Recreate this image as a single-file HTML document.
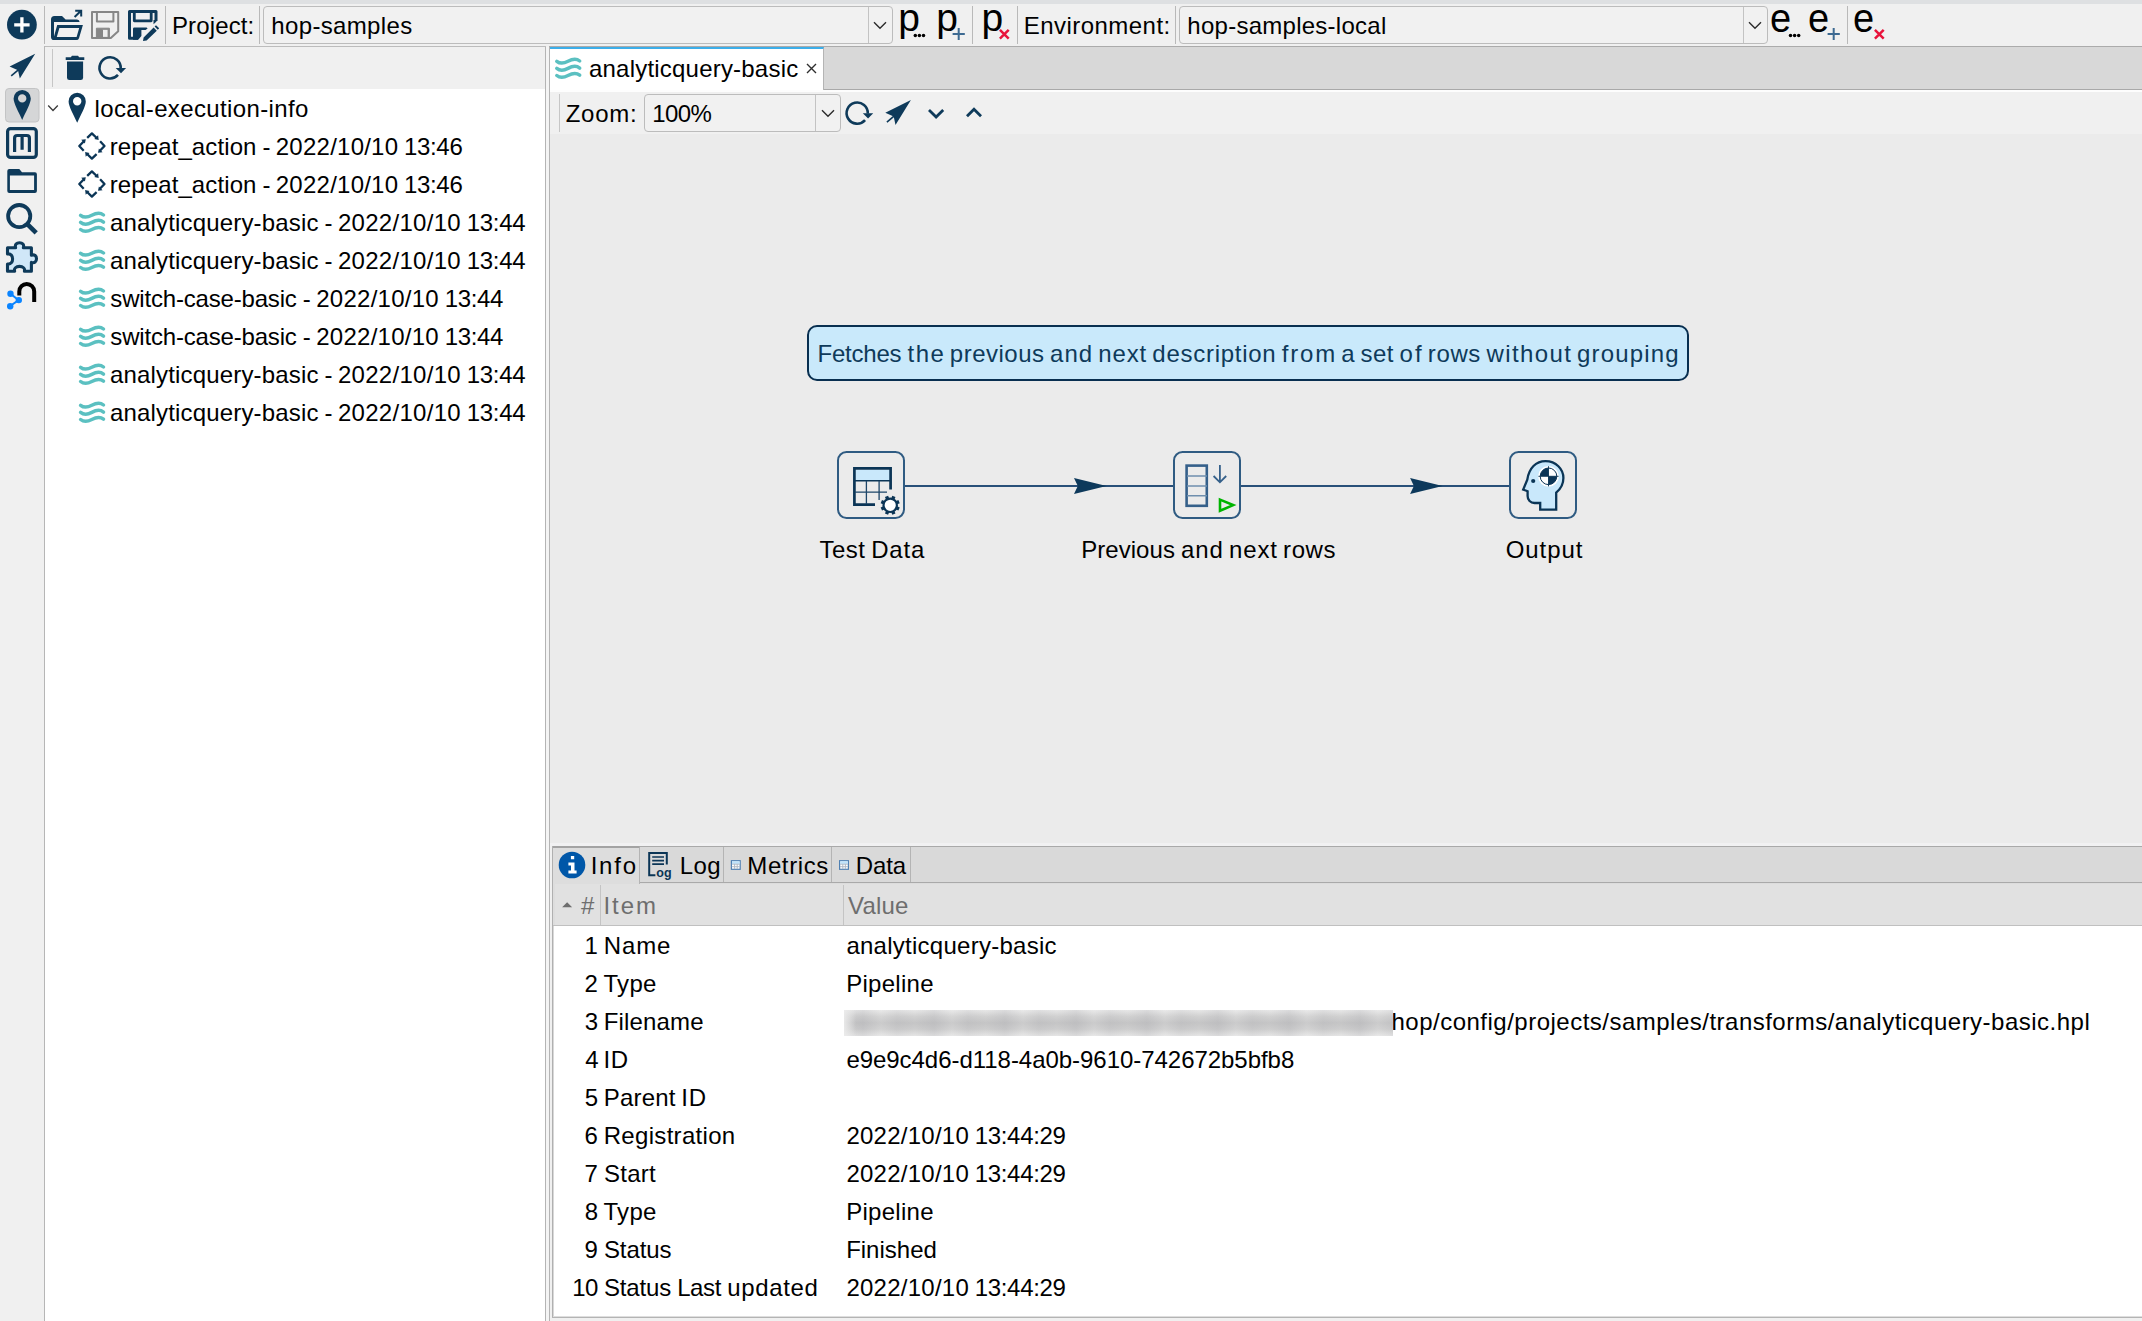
<!DOCTYPE html><html><head><meta charset='utf-8'><title>Hop</title><style>
*{box-sizing:border-box;margin:0;padding:0}
html,body{width:2142px;height:1321px;overflow:hidden;background:#f0f0f0}
body{position:relative;font-family:"Liberation Sans",sans-serif;font-size:24px;color:#000;line-height:28px}
.a{position:absolute}
.t{position:absolute;white-space:pre;height:28px;line-height:28px}
.vs{position:absolute;width:1px;background:#c6c6c6}
.combo{position:absolute;border:1px solid #bcbcbc;border-radius:4px;background:#f1f1f1}
.combo i{position:absolute;top:0;bottom:0;width:1px;background:#c3c3c3}
svg{position:absolute;overflow:visible}
</style></head><body>
<div class="a" style="left:0px;top:0px;width:2142px;height:4px;background:#dee0e2"></div>
<div class="a" style="left:44px;top:46px;width:502px;height:1px;background:#bcbcbc"></div>
<div class="a" style="left:549px;top:46px;width:1593px;height:1px;background:#ababab"></div>
<div class="a" style="left:44px;top:46px;width:1px;height:1275px;background:#b6b6b6"></div>
<div class="a" style="left:45px;top:89px;width:500px;height:1232px;background:#fff"></div>
<div class="a" style="left:545px;top:47px;width:1px;height:1274px;background:#b4b4b4"></div>
<div class="a" style="left:546px;top:47px;width:3px;height:1274px;background:#f4f4f4"></div>
<div class="a" style="left:549px;top:47px;width:1px;height:1274px;background:#b4b4b4"></div>
<div class="a" style="left:550px;top:47px;width:1592px;height:42px;background:#d8d8d8"></div>
<div class="a" style="left:550px;top:89px;width:1592px;height:1px;background:#a9a9a9"></div>
<div class="a" style="left:550px;top:90px;width:1592px;height:2px;background:#fdfdfd"></div>
<div class="a" style="left:550px;top:47px;width:274px;height:43px;background:#fff;border-top:2px solid #3daee9;border-right:1px solid #b4b4b4"></div>
<div class="a" style="left:550px;top:134px;width:1592px;height:709px;background:#ebebeb"></div>
<div class="a" style="left:550px;top:843px;width:1592px;height:3px;background:#f1f1f2"></div>
<div class="a" style="left:552px;top:846px;width:1590px;height:1px;background:#a9a9a9"></div>
<div class="a" style="left:552px;top:847px;width:1590px;height:35px;background:#d9d9d9"></div>
<div class="a" style="left:552px;top:882px;width:1590px;height:1px;background:#a9a9a9"></div>
<div class="a" style="left:552px;top:883px;width:1590px;height:1px;background:#dcdcdc"></div>
<div class="a" style="left:552px;top:846px;width:1px;height:472px;background:#b0b0b0"></div>
<div class="a" style="left:553px;top:846px;width:87px;height:38px;background:#dddddd;border-top:2px solid #a3a3a3;border-right:1px solid #b4b4b4"></div>
<div class="a" style="left:723px;top:847px;width:1px;height:35px;background:#b4b4b4"></div>
<div class="a" style="left:831px;top:847px;width:1px;height:35px;background:#b4b4b4"></div>
<div class="a" style="left:910px;top:847px;width:1px;height:35px;background:#b4b4b4"></div>
<div class="a" style="left:553px;top:884px;width:1589px;height:433px;background:#fff"></div>
<div class="a" style="left:553px;top:884px;width:1589px;height:41px;background:#e1e1e1"></div>
<div class="a" style="left:553px;top:884px;width:2px;height:41px;background:#dddddd"></div>
<div class="a" style="left:553px;top:925px;width:1589px;height:1px;background:#c0c0c0"></div>
<div class="a" style="left:553px;top:926px;width:1px;height:391px;background:#d8d8d8"></div>
<div class="a" style="left:600px;top:885px;width:1px;height:40px;background:#c4c4c4"></div>
<div class="a" style="left:843px;top:885px;width:1px;height:40px;background:#c4c4c4"></div>
<div class="a" style="left:552px;top:1317px;width:1590px;height:1px;background:#b4b4b4"></div>
<div class="a" style="left:553px;top:1316px;width:1589px;height:1px;background:#dedede"></div>
<div class="a" style="left:552px;top:1318px;width:1590px;height:3px;background:#f0f0f0"></div>
<div class="vs" style="left:44px;top:6px;height:38px;background:#b9b9b9"></div>
<div class="vs" style="left:165px;top:6px;height:38px;background:#b9b9b9"></div>
<div class="vs" style="left:259px;top:6px;height:38px;background:#b9b9b9"></div>
<div class="vs" style="left:972px;top:6px;height:38px;background:#b9b9b9"></div>
<div class="vs" style="left:1017px;top:6px;height:38px;background:#b9b9b9"></div>
<div class="vs" style="left:1175px;top:6px;height:38px;background:#b9b9b9"></div>
<div class="vs" style="left:1847px;top:6px;height:38px;background:#b9b9b9"></div>
<div class="a" style="left:898.3px;top:-4px;font-size:39px;line-height:44px;height:44px;white-space:pre">p</div>
<div class="a" style="left:936.2px;top:-4px;font-size:39px;line-height:44px;height:44px;white-space:pre">p</div>
<div class="a" style="left:981.4px;top:-4px;font-size:39px;line-height:44px;height:44px;white-space:pre">p</div>
<div class="a" style="left:1769.8px;top:-4px;font-size:40px;line-height:44px;height:44px;white-space:pre;transform:scaleX(.95);transform-origin:0 0">e</div>
<div class="a" style="left:1808.2px;top:-4px;font-size:40px;line-height:44px;height:44px;white-space:pre;transform:scaleX(.95);transform-origin:0 0">e</div>
<div class="a" style="left:1852.6px;top:-4px;font-size:40px;line-height:44px;height:44px;white-space:pre;transform:scaleX(.95);transform-origin:0 0">e</div>
<div class="t" style="left:171.93px;top:12px;letter-spacing:0.14px">Project:</div>
<div class="combo" style="left:263px;top:6px;width:630px;height:38px"><i style="left:604px"></i></div>
<div class="t" style="left:271.34px;top:12px;letter-spacing:0.34px">hop-samples</div>
<div class="t" style="left:1023.73px;top:12px;letter-spacing:0.46px">Environment:</div>
<div class="combo" style="left:1179px;top:6px;width:589px;height:38px"><i style="left:563px"></i></div>
<div class="t" style="left:1187.34px;top:12px;letter-spacing:0.26px">hop-samples-local</div>
<div class="vs" style="left:52px;top:49px;height:38px"></div>
<div class="t" style="left:94.58px;top:95px;letter-spacing:0.37px">local-execution-info</div>
<div class="t" style="left:109.71px;top:133px"><span style="display:inline-block;width:152.71px;letter-spacing:0.11px">repeat_action </span><span style="display:inline-block;width:13.38px;letter-spacing:-0.60px">- </span><span style="display:inline-block;width:128.22px;letter-spacing:0.24px">2022/10/10 </span><span style="letter-spacing:-0.33px">13:46</span></div>
<div class="t" style="left:109.71px;top:171px"><span style="display:inline-block;width:152.71px;letter-spacing:0.11px">repeat_action </span><span style="display:inline-block;width:13.38px;letter-spacing:-0.60px">- </span><span style="display:inline-block;width:128.22px;letter-spacing:0.24px">2022/10/10 </span><span style="letter-spacing:-0.33px">13:46</span></div>
<div class="t" style="left:109.98px;top:209px"><span style="display:inline-block;width:214.55px;letter-spacing:0.17px">analyticquery-basic </span><span style="display:inline-block;width:13.43px;letter-spacing:-0.57px">- </span><span style="display:inline-block;width:128.70px;letter-spacing:0.29px">2022/10/10 </span><span style="letter-spacing:-0.28px">13:44</span></div>
<div class="t" style="left:109.98px;top:247px"><span style="display:inline-block;width:214.55px;letter-spacing:0.17px">analyticquery-basic </span><span style="display:inline-block;width:13.43px;letter-spacing:-0.57px">- </span><span style="display:inline-block;width:128.70px;letter-spacing:0.29px">2022/10/10 </span><span style="letter-spacing:-0.28px">13:44</span></div>
<div class="t" style="left:110.33px;top:285px"><span style="display:inline-block;width:192.50px;letter-spacing:-0.18px">switch-case-basic </span><span style="display:inline-block;width:13.40px;letter-spacing:-0.59px">- </span><span style="display:inline-block;width:128.42px;letter-spacing:0.26px">2022/10/10 </span><span style="letter-spacing:-0.31px">13:44</span></div>
<div class="t" style="left:110.33px;top:323px"><span style="display:inline-block;width:192.50px;letter-spacing:-0.18px">switch-case-basic </span><span style="display:inline-block;width:13.40px;letter-spacing:-0.59px">- </span><span style="display:inline-block;width:128.42px;letter-spacing:0.26px">2022/10/10 </span><span style="letter-spacing:-0.31px">13:44</span></div>
<div class="t" style="left:109.98px;top:361px"><span style="display:inline-block;width:214.55px;letter-spacing:0.17px">analyticquery-basic </span><span style="display:inline-block;width:13.43px;letter-spacing:-0.57px">- </span><span style="display:inline-block;width:128.70px;letter-spacing:0.29px">2022/10/10 </span><span style="letter-spacing:-0.28px">13:44</span></div>
<div class="t" style="left:109.98px;top:399px"><span style="display:inline-block;width:214.55px;letter-spacing:0.17px">analyticquery-basic </span><span style="display:inline-block;width:13.43px;letter-spacing:-0.57px">- </span><span style="display:inline-block;width:128.70px;letter-spacing:0.29px">2022/10/10 </span><span style="letter-spacing:-0.28px">13:44</span></div>
<div class="t" style="left:588.98px;top:55px;letter-spacing:0.21px">analyticquery-basic</div>
<div class="vs" style="left:559px;top:94px;height:38px"></div>
<div class="t" style="left:565.64px;top:100px;letter-spacing:0.76px">Zoom:</div>
<div class="combo" style="left:644px;top:94px;width:197px;height:38px"><i style="left:170px"></i></div>
<div class="t" style="left:652.17px;top:100px;letter-spacing:-0.57px">100%</div>
<div class="a" style="left:807px;top:325px;width:882px;height:56px;background:#c9e9fb;border:2px solid #082f50;border-radius:10px"></div>
<div class="t" style="left:817.53px;top:340px;color:#0e3a5a"><span style="display:inline-block;width:90.08px;letter-spacing:-0.23px">Fetches </span><span style="display:inline-block;width:42.24px;letter-spacing:1.39px">the </span><span style="display:inline-block;width:100.28px;letter-spacing:0.49px">previous </span><span style="display:inline-block;width:48.11px;letter-spacing:0.99px">and </span><span style="display:inline-block;width:54.16px;letter-spacing:0.90px">next </span><span style="display:inline-block;width:129.47px;letter-spacing:0.73px">description </span><span style="display:inline-block;width:59.43px;letter-spacing:1.78px">from </span><span style="display:inline-block;width:19.24px;letter-spacing:-0.21px">a </span><span style="display:inline-block;width:38.98px;letter-spacing:0.44px">set </span><span style="display:inline-block;width:28.33px;letter-spacing:2.22px">of </span><span style="display:inline-block;width:58.63px;letter-spacing:0.63px">rows </span><span style="display:inline-block;width:90.59px;letter-spacing:1.41px">without </span><span style="letter-spacing:1.17px">grouping</span></div>
<div class="t" style="left:819.56px;top:536px"><span style="display:inline-block;width:51.61px;letter-spacing:0.46px">Test </span><span style="letter-spacing:0.81px">Data</span></div>
<div class="t" style="left:1081.13px;top:536px"><span style="display:inline-block;width:99.87px;letter-spacing:0.06px">Previous </span><span style="display:inline-block;width:48.03px;letter-spacing:0.96px">and </span><span style="display:inline-block;width:54.08px;letter-spacing:0.87px">next </span><span style="letter-spacing:0.60px">rows</span></div>
<div class="t" style="left:1505.76px;top:536px;letter-spacing:0.91px">Output</div>
<div class="a" style="left:656.2px;top:866px;font-size:12.5px;font-weight:bold;line-height:14px;height:14px;color:#0b3556;letter-spacing:.3px;white-space:pre">og</div>
<div class="t" style="left:590.69px;top:852px;letter-spacing:1.76px">Info</div>
<div class="t" style="left:679.73px;top:852px;letter-spacing:0.48px">Log</div>
<div class="t" style="left:747.33px;top:852px;letter-spacing:0.60px">Metrics</div>
<div class="t" style="left:855.63px;top:852px;letter-spacing:-0.04px">Data</div>
<div class="t" style="left:580.99px;top:892px;color:#6e6e6e;letter-spacing:1.76px">#</div>
<div class="t" style="left:603.49px;top:892px;color:#6e6e6e;letter-spacing:1.97px">Item</div>
<div class="t" style="left:847.99px;top:892px;color:#6e6e6e;letter-spacing:0.19px">Value</div>
<div class="t" style="left:584.57px;top:932px;letter-spacing:-2.56px">1</div>
<div class="t" style="left:603.73px;top:932px;letter-spacing:0.90px">Name</div>
<div class="t" style="left:846.38px;top:932px;letter-spacing:0.26px">analyticquery-basic</div>
<div class="t" style="left:584.49px;top:970px;letter-spacing:0.85px">2</div>
<div class="t" style="left:603.46px;top:970px;letter-spacing:0.32px">Type</div>
<div class="t" style="left:846.13px;top:970px;letter-spacing:0.28px">Pipeline</div>
<div class="t" style="left:584.79px;top:1008px;letter-spacing:0.41px">3</div>
<div class="t" style="left:603.73px;top:1008px;letter-spacing:0.16px">Filename</div>
<div class="t" style="left:585.15px;top:1046px;letter-spacing:-0.31px">4</div>
<div class="t" style="left:603.49px;top:1046px;letter-spacing:0.69px">ID</div>
<div class="t" style="left:846.38px;top:1046px;letter-spacing:-0.04px">e9e9c4d6-d118-4a0b-9610-742672b5bfb8</div>
<div class="t" style="left:584.74px;top:1084px;letter-spacing:0.41px">5</div>
<div class="t" style="left:603.73px;top:1084px"><span style="display:inline-block;width:77.64px;letter-spacing:0.19px">Parent </span><span style="letter-spacing:0.69px">ID</span></div>
<div class="t" style="left:584.48px;top:1122px;letter-spacing:0.71px">6</div>
<div class="t" style="left:603.73px;top:1122px;letter-spacing:0.31px">Registration</div>
<div class="t" style="left:846.39px;top:1122px"><span style="display:inline-block;width:128.31px;letter-spacing:0.25px">2022/10/10 </span><span style="letter-spacing:-0.31px">13:44:29</span></div>
<div class="t" style="left:584.47px;top:1160px;letter-spacing:0.88px">7</div>
<div class="t" style="left:603.91px;top:1160px;letter-spacing:0.29px">Start</div>
<div class="t" style="left:846.39px;top:1160px"><span style="display:inline-block;width:128.31px;letter-spacing:0.25px">2022/10/10 </span><span style="letter-spacing:-0.31px">13:44:29</span></div>
<div class="t" style="left:584.66px;top:1198px;letter-spacing:0.53px">8</div>
<div class="t" style="left:603.46px;top:1198px;letter-spacing:0.32px">Type</div>
<div class="t" style="left:846.13px;top:1198px;letter-spacing:0.28px">Pipeline</div>
<div class="t" style="left:584.58px;top:1236px;letter-spacing:0.70px">9</div>
<div class="t" style="left:603.91px;top:1236px;letter-spacing:-0.08px">Status</div>
<div class="t" style="left:846.13px;top:1236px;letter-spacing:0.00px">Finished</div>
<div class="t" style="left:572.37px;top:1274px;letter-spacing:-0.64px">10</div>
<div class="t" style="left:603.91px;top:1274px"><span style="display:inline-block;width:73.22px;letter-spacing:-0.16px">Status </span><span style="display:inline-block;width:50.16px;letter-spacing:-0.39px">Last </span><span style="letter-spacing:0.65px">updated</span></div>
<div class="t" style="left:846.39px;top:1274px"><span style="display:inline-block;width:128.31px;letter-spacing:0.25px">2022/10/10 </span><span style="letter-spacing:-0.31px">13:44:29</span></div>
<div class="t" style="left:1391.54px;top:1008px;letter-spacing:0.49px">hop/config/projects/samples/transforms/analyticquery-basic.hpl</div>
<div class="a" style="left:844px;top:1010px;width:549px;height:26px;background:linear-gradient(90deg,rgba(236,236,236,.9) 0,rgba(236,236,236,0) 12px),repeating-linear-gradient(90deg,rgba(140,140,150,0) 0,rgba(140,140,150,.13) 19px,rgba(255,255,255,.10) 37px,rgba(140,140,150,.08) 53px,rgba(140,140,150,0) 71px),linear-gradient(180deg,#e7e7e7 0,#d0d0d0 26%,#c5c5c6 50%,#cecece 74%,#e6e6e6 100%)"></div>
<svg width="2142" height="1321" viewBox="0 0 2142 1321" style="left:0;top:0"><circle cx="21.9" cy="24.7" r="14.9" fill="#0e3a5a"/>
<path d="M14.2 24.8h15.4M21.9 17.2v15.2" stroke="#fff" stroke-width="3.3" fill="none"/>
<path fill="#0e3a5a" fill-rule="evenodd" d="M51 19.6 Q51 16.1 54.5 16.1 L62 16.1 L65.6 19.4 L77 19.4 Q79.6 19.6 79.6 21.9 L54 21.9 L54 36.5 L57.2 24.9 L82.9 24.9 L79 38.2 Q78.4 40.1 76.3 40.1 L54 40.1 Q51 40.1 51 37 Z M59.4 27.9 L56.8 37 L76.6 37 L79.2 27.9 Z"/><path d="M74.6 17 L81 10.7 M75.2 10.7 H81.2 V16.6" stroke="#0e3a5a" stroke-width="2" fill="none"/>
<g transform="translate(91 10.9)"><path fill="none" stroke="#878787" stroke-width="2.0" stroke-linejoin="round" d="M1 1 H27.2 V20.3 L19.8 27.2 H1 Z"/><path fill="none" stroke="#878787" stroke-width="2.0" stroke-linejoin="round" d="M5.9 1 V10.6 H22.4 V1"/><path fill="#878787" stroke="#878787" stroke-width="1" stroke-linejoin="round" fill-rule="evenodd" d="M5.4 17.3 H18.4 V27.4 H5.4 Z M11.5 18.4 H17.1 V26.5 H11.5 Z"/></g>
<path fill="none" stroke="#0e3a5a" stroke-width="3" stroke-linejoin="round" d="M156 21 V11.5 H129.5 V38.2 H138"/><path fill="none" stroke="#0e3a5a" stroke-width="2.8" stroke-linejoin="round" d="M134.3 11.5 V20.8 H151.2 V11.5"/><path fill="#0e3a5a" d="M156.5 20 v1.6 l-3 2.6 v-4.2z"/><path fill="#0e3a5a" d="M133 28.8 Q133 27.6 134.4 27.6 H146.6 L147.6 28.6 L145.6 30 H141.4 V36 L138.2 39.7 H133 Z"/><path fill="#0e3a5a" d="M143 40.9 L143.6 37.4 L153.6 27.6 L156.8 30.8 L146.6 40.6 Z M154.6 26.6 L156 25.2 L159.2 28.2 L157.8 29.8 Z"/>
<path fill="#0e3a5a" d="M35.2 53.8 L9.6 66.5 L18 70.3 L19.8 78.6 Z"/><path d="M18.6 69.6 L11.2 75.8" stroke="#0e3a5a" stroke-width="1.6" fill="none"/>
<rect x="5.5" y="88.5" width="33.5" height="33.5" rx="3.5" fill="#d5d6d7" stroke="#c3c4c5" stroke-width="1"/>
<path fill="#0e3a5a" fill-rule="evenodd" d="M22.2 89.9 A8.6 8.6 0 0 1 30.8 98.6 C30.8 103.5 25.5 112.5 22.2 120 C18.9 112.5 13.6 103.5 13.6 98.6 A8.6 8.6 0 0 1 22.2 89.9 Z M22.2 94.2 A4.2 4.2 0 1 0 22.2 102.6 A4.2 4.2 0 1 0 22.2 94.2 Z"/>
<g transform="translate(55 2.8)"><path fill="#0e3a5a" fill-rule="evenodd" d="M22.2 89.9 A8.6 8.6 0 0 1 30.8 98.6 C30.8 103.5 25.5 112.5 22.2 120 C18.9 112.5 13.6 103.5 13.6 98.6 A8.6 8.6 0 0 1 22.2 89.9 Z M22.2 94.2 A4.2 4.2 0 1 0 22.2 102.6 A4.2 4.2 0 1 0 22.2 94.2 Z"/></g>
<rect x="7.6" y="128.6" width="28.7" height="28.8" rx="3" fill="none" stroke="#0e3a5a" stroke-width="3.2"/>
<path d="M14.6 151.9 V138 Q14.6 135.5 17.2 135.5 H26.8 Q29.4 135.5 29.4 138 V151.9 M22.1 136 V149.8" fill="none" stroke="#0e3a5a" stroke-width="3.2"/>
<path fill="#0e3a5a" fill-rule="evenodd" d="M7.3 171 Q7.3 169 9.3 169 H19.3 L22 172.2 H35 Q36.9 172.2 36.9 174.2 V191 Q36.9 193 34.9 193 H9.3 Q7.3 193 7.3 191 Z M9.9 175.6 V189.9 H34.1 V175.6 Z"/>
<circle cx="19.2" cy="216.1" r="11.1" fill="none" stroke="#0e3a5a" stroke-width="3.8"/>
<path d="M27.3 224.2 L36.2 232.9" stroke="#0e3a5a" stroke-width="4.6" fill="none"/>
<path fill="#d0e7f8" stroke="#0e3a5a" stroke-width="3.1" stroke-linejoin="round" d="M8.5 247.8 H15.6 C14.6 244.6 16.6 242.7 19.5 242.7 C22.4 242.7 24.4 244.6 23.4 247.8 H31.4 V255.2 C34.6 254.2 36.5 256 36.5 258.8 C36.5 261.6 34.6 263.4 31.4 262.4 V271.2 H24.4 C25.2 268.4 23 266.4 19.5 266.4 C16 266.4 13.8 268.4 14.6 271.2 H7.5 V264 C10.8 264.6 12.6 262 12.6 258.9 C12.6 255.8 10.8 253.4 7.5 254 V247.8 Z"/>
<path d="M19.3 295.5 V291.4 A7.45 7.45 0 0 1 34.2 291.4 V301.9" fill="none" stroke="#000" stroke-width="4"/>
<path d="M10.5 293.7 L18.6 300.1 L10.2 306" fill="none" stroke="#0a84ff" stroke-width="2"/>
<circle cx="10.5" cy="293.7" r="3.2" fill="#0a84ff"/>
<circle cx="18.8" cy="300.1" r="3.2" fill="#0a84ff"/>
<circle cx="10.2" cy="306.2" r="3.2" fill="#0a84ff"/>
<path fill="#0e3a5a" d="M65.7 57.2 H70.8 L72 55.7 H78 L79.2 57.2 H84.3 V60.1 H65.7 Z"/><path fill="#0e3a5a" d="M67 61.5 H83.1 V77.7 Q83.1 80.1 80.7 80.1 H69.4 Q67 80.1 67 77.7 Z"/>
<path d="M120.70 68.50 A10.6 10.6 0 1 0 117.98 74.99" fill="none" stroke="#0e3a5a" stroke-width="2.6"/><path fill="#0e3a5a" d="M115.70 68.10 H126.10 L121.00 73.30 Z"/>
<path d="M48.2 105.5 L53 110.5 L57.8 105.5" fill="none" stroke="#3b3b3b" stroke-width="1.3"/>
<g transform="translate(91.9 146)"><g transform="rotate(0)"><path d="M-4.7 -8.2 L0 -12.6 L4.8 -8" fill="none" stroke="#0b3556" stroke-width="2.3" stroke-linejoin="round"/><path fill="#0b3556" d="M6.8 -6.1 L2.4 -7.0 L6.2 -10.7 Z"/></g><g transform="rotate(90)"><path d="M-4.7 -8.2 L0 -12.6 L4.8 -8" fill="none" stroke="#0b3556" stroke-width="2.3" stroke-linejoin="round"/><path fill="#0b3556" d="M6.8 -6.1 L2.4 -7.0 L6.2 -10.7 Z"/></g><g transform="rotate(180)"><path d="M-4.7 -8.2 L0 -12.6 L4.8 -8" fill="none" stroke="#0b3556" stroke-width="2.3" stroke-linejoin="round"/><path fill="#0b3556" d="M6.8 -6.1 L2.4 -7.0 L6.2 -10.7 Z"/></g><g transform="rotate(270)"><path d="M-4.7 -8.2 L0 -12.6 L4.8 -8" fill="none" stroke="#0b3556" stroke-width="2.3" stroke-linejoin="round"/><path fill="#0b3556" d="M6.8 -6.1 L2.4 -7.0 L6.2 -10.7 Z"/></g></g>
<g transform="translate(91.9 184)"><g transform="rotate(0)"><path d="M-4.7 -8.2 L0 -12.6 L4.8 -8" fill="none" stroke="#0b3556" stroke-width="2.3" stroke-linejoin="round"/><path fill="#0b3556" d="M6.8 -6.1 L2.4 -7.0 L6.2 -10.7 Z"/></g><g transform="rotate(90)"><path d="M-4.7 -8.2 L0 -12.6 L4.8 -8" fill="none" stroke="#0b3556" stroke-width="2.3" stroke-linejoin="round"/><path fill="#0b3556" d="M6.8 -6.1 L2.4 -7.0 L6.2 -10.7 Z"/></g><g transform="rotate(180)"><path d="M-4.7 -8.2 L0 -12.6 L4.8 -8" fill="none" stroke="#0b3556" stroke-width="2.3" stroke-linejoin="round"/><path fill="#0b3556" d="M6.8 -6.1 L2.4 -7.0 L6.2 -10.7 Z"/></g><g transform="rotate(270)"><path d="M-4.7 -8.2 L0 -12.6 L4.8 -8" fill="none" stroke="#0b3556" stroke-width="2.3" stroke-linejoin="round"/><path fill="#0b3556" d="M6.8 -6.1 L2.4 -7.0 L6.2 -10.7 Z"/></g></g>
<g transform="translate(78.6 211)"><path d="M2 4.3 C5.2 6.9 9 6.5 13.2 4.3 C17.4 2.0 21.2 1.0 24.9 4.0" fill="none" stroke="#5bc0c1" stroke-width="3.5" stroke-linecap="round"/><path d="M2 11.4 C5.2 14.0 9 13.6 13.2 11.4 C17.4 9.1 21.2 8.1 24.9 11.1" fill="none" stroke="#5bc0c1" stroke-width="3.5" stroke-linecap="round"/><path d="M2 18.5 C5.2 21.1 9 20.7 13.2 18.5 C17.4 16.2 21.2 15.2 24.9 18.2" fill="none" stroke="#5bc0c1" stroke-width="3.5" stroke-linecap="round"/></g>
<g transform="translate(78.6 249)"><path d="M2 4.3 C5.2 6.9 9 6.5 13.2 4.3 C17.4 2.0 21.2 1.0 24.9 4.0" fill="none" stroke="#5bc0c1" stroke-width="3.5" stroke-linecap="round"/><path d="M2 11.4 C5.2 14.0 9 13.6 13.2 11.4 C17.4 9.1 21.2 8.1 24.9 11.1" fill="none" stroke="#5bc0c1" stroke-width="3.5" stroke-linecap="round"/><path d="M2 18.5 C5.2 21.1 9 20.7 13.2 18.5 C17.4 16.2 21.2 15.2 24.9 18.2" fill="none" stroke="#5bc0c1" stroke-width="3.5" stroke-linecap="round"/></g>
<g transform="translate(78.6 287)"><path d="M2 4.3 C5.2 6.9 9 6.5 13.2 4.3 C17.4 2.0 21.2 1.0 24.9 4.0" fill="none" stroke="#5bc0c1" stroke-width="3.5" stroke-linecap="round"/><path d="M2 11.4 C5.2 14.0 9 13.6 13.2 11.4 C17.4 9.1 21.2 8.1 24.9 11.1" fill="none" stroke="#5bc0c1" stroke-width="3.5" stroke-linecap="round"/><path d="M2 18.5 C5.2 21.1 9 20.7 13.2 18.5 C17.4 16.2 21.2 15.2 24.9 18.2" fill="none" stroke="#5bc0c1" stroke-width="3.5" stroke-linecap="round"/></g>
<g transform="translate(78.6 325)"><path d="M2 4.3 C5.2 6.9 9 6.5 13.2 4.3 C17.4 2.0 21.2 1.0 24.9 4.0" fill="none" stroke="#5bc0c1" stroke-width="3.5" stroke-linecap="round"/><path d="M2 11.4 C5.2 14.0 9 13.6 13.2 11.4 C17.4 9.1 21.2 8.1 24.9 11.1" fill="none" stroke="#5bc0c1" stroke-width="3.5" stroke-linecap="round"/><path d="M2 18.5 C5.2 21.1 9 20.7 13.2 18.5 C17.4 16.2 21.2 15.2 24.9 18.2" fill="none" stroke="#5bc0c1" stroke-width="3.5" stroke-linecap="round"/></g>
<g transform="translate(78.6 363)"><path d="M2 4.3 C5.2 6.9 9 6.5 13.2 4.3 C17.4 2.0 21.2 1.0 24.9 4.0" fill="none" stroke="#5bc0c1" stroke-width="3.5" stroke-linecap="round"/><path d="M2 11.4 C5.2 14.0 9 13.6 13.2 11.4 C17.4 9.1 21.2 8.1 24.9 11.1" fill="none" stroke="#5bc0c1" stroke-width="3.5" stroke-linecap="round"/><path d="M2 18.5 C5.2 21.1 9 20.7 13.2 18.5 C17.4 16.2 21.2 15.2 24.9 18.2" fill="none" stroke="#5bc0c1" stroke-width="3.5" stroke-linecap="round"/></g>
<g transform="translate(78.6 401)"><path d="M2 4.3 C5.2 6.9 9 6.5 13.2 4.3 C17.4 2.0 21.2 1.0 24.9 4.0" fill="none" stroke="#5bc0c1" stroke-width="3.5" stroke-linecap="round"/><path d="M2 11.4 C5.2 14.0 9 13.6 13.2 11.4 C17.4 9.1 21.2 8.1 24.9 11.1" fill="none" stroke="#5bc0c1" stroke-width="3.5" stroke-linecap="round"/><path d="M2 18.5 C5.2 21.1 9 20.7 13.2 18.5 C17.4 16.2 21.2 15.2 24.9 18.2" fill="none" stroke="#5bc0c1" stroke-width="3.5" stroke-linecap="round"/></g>
<path d="M874.0 22.2 L880 28.2 L886.0 22.2" fill="none" stroke="#2b2b2b" stroke-width="1.4"/>
<path d="M1749.0 22.2 L1755 28.2 L1761.0 22.2" fill="none" stroke="#2b2b2b" stroke-width="1.4"/>
<path d="M822.0 110.2 L828 116.2 L834.0 110.2" fill="none" stroke="#2b2b2b" stroke-width="1.4"/>
<circle cx="915.3" cy="35.5" r="1.75" fill="#000"/><circle cx="919.4" cy="35.5" r="1.75" fill="#000"/><circle cx="923.5" cy="35.5" r="1.75" fill="#000"/>
<path d="M952.6 33.9H964.8000000000001M958.7 27.9V40.1" stroke="#3d6a92" stroke-width="2" fill="none"/>
<path d="M999.9 29.9L1008.6999999999999 38.699999999999996M1008.6999999999999 29.9L999.9 38.699999999999996" stroke="#e8133b" stroke-width="2.5" fill="none"/>
<circle cx="1790.5" cy="35.5" r="1.75" fill="#000"/><circle cx="1794.6" cy="35.5" r="1.75" fill="#000"/><circle cx="1798.7" cy="35.5" r="1.75" fill="#000"/>
<path d="M1827.6000000000001 33.9H1839.8M1833.7 27.9V40.1" stroke="#3d6a92" stroke-width="2" fill="none"/>
<path d="M1874.8999999999999 29.9L1883.7 38.699999999999996M1883.7 29.9L1874.8999999999999 38.699999999999996" stroke="#e8133b" stroke-width="2.5" fill="none"/>
<g transform="translate(554.8 57)"><path d="M2 4.3 C5.2 6.9 9 6.5 13.2 4.3 C17.4 2.0 21.2 1.0 24.9 4.0" fill="none" stroke="#5bc0c1" stroke-width="3.5" stroke-linecap="round"/><path d="M2 11.4 C5.2 14.0 9 13.6 13.2 11.4 C17.4 9.1 21.2 8.1 24.9 11.1" fill="none" stroke="#5bc0c1" stroke-width="3.5" stroke-linecap="round"/><path d="M2 18.5 C5.2 21.1 9 20.7 13.2 18.5 C17.4 16.2 21.2 15.2 24.9 18.2" fill="none" stroke="#5bc0c1" stroke-width="3.5" stroke-linecap="round"/></g>
<path d="M807 64 L816 73 M816 64 L807 73" stroke="#2e2e2e" stroke-width="1.4" fill="none"/>
<path d="M867.80 113.70 A10.6 10.6 0 1 0 865.08 120.19" fill="none" stroke="#0e3a5a" stroke-width="2.6"/><path fill="#0e3a5a" d="M862.80 113.30 H873.20 L868.10 118.50 Z"/>
<g transform="translate(875.7 46.3)"><path fill="#0e3a5a" d="M35.2 53.8 L9.6 66.5 L18 70.3 L19.8 78.6 Z"/><path d="M18.6 69.6 L11.2 75.8" stroke="#0e3a5a" stroke-width="1.6" fill="none"/></g>
<path d="M929 110 L936.1 117 L943.2 110" fill="none" stroke="#0e3a5a" stroke-width="2.8"/>
<path d="M967 116.2 L974 109.2 L981 116.2" fill="none" stroke="#0e3a5a" stroke-width="2.8"/>
<rect x="838" y="452" width="66" height="66" rx="8.5" fill="none" stroke="#2f5b82" stroke-width="2"/>
<rect x="1174" y="452" width="66" height="66" rx="8.5" fill="none" stroke="#2f5b82" stroke-width="2"/>
<rect x="1510" y="452" width="66" height="66" rx="8.5" fill="none" stroke="#2f5b82" stroke-width="2"/>
<path d="M905 486 H1173 M1241 486 H1509" stroke="#295079" stroke-width="2.2" fill="none"/>
<path fill="#0d395b" d="M1074 478 L1106.5 486 L1074 494 L1077.8 486 Z"/>
<path fill="#0d395b" d="M1410.1 478 L1442.6 486 L1410.1 494 L1413.8999999999999 486 Z"/>
<rect x="855.6" y="470" width="34" height="10" fill="#c9e8fb"/>
<path d="M890.6 489.5 V468.4 H854.4 V504.6 H875" fill="none" stroke="#0b3556" stroke-width="2.7"/>
<path d="M855 480.8 H890" fill="none" stroke="#0b3556" stroke-width="1.6"/>
<path d="M866.4 481 V504 M879.1 481 V500 M855 492.1 H887" fill="none" stroke="#1d4669" stroke-width="1.3"/>
<circle cx="890.2" cy="505.3" r="11.6" fill="#ebebeb"/>
<g transform="translate(890.2 505.3)"><rect x="-1.7" y="-9.6" width="3.4" height="4" fill="#0b3556" transform="rotate(22.5)"/><rect x="-1.7" y="-9.6" width="3.4" height="4" fill="#0b3556" transform="rotate(67.5)"/><rect x="-1.7" y="-9.6" width="3.4" height="4" fill="#0b3556" transform="rotate(112.5)"/><rect x="-1.7" y="-9.6" width="3.4" height="4" fill="#0b3556" transform="rotate(157.5)"/><rect x="-1.7" y="-9.6" width="3.4" height="4" fill="#0b3556" transform="rotate(202.5)"/><rect x="-1.7" y="-9.6" width="3.4" height="4" fill="#0b3556" transform="rotate(247.5)"/><rect x="-1.7" y="-9.6" width="3.4" height="4" fill="#0b3556" transform="rotate(292.5)"/><rect x="-1.7" y="-9.6" width="3.4" height="4" fill="#0b3556" transform="rotate(337.5)"/><circle r="6.7" fill="#fff" stroke="#0b3556" stroke-width="2.2"/></g>
<rect x="1186.6" y="465.6" width="20.2" height="40.2" fill="none" stroke="#35608a" stroke-width="2.6"/>
<path d="M1187 476 H1207 M1187 486 H1207 M1187 495.8 H1207" stroke="#6f8fae" stroke-width="1.6" fill="none"/>
<path d="M1219.9 465 V482 M1213.6 476 L1219.9 482.3 L1226.2 476" stroke="#35608a" stroke-width="1.8" fill="none"/>
<path d="M1220 499.6 L1233.2 505.1 L1220 510.8 Z" fill="none" stroke="#00b400" stroke-width="2.6" stroke-linejoin="miter"/>
<path d="M1540.2 509.7 V503 H1534.5 C1530.5 503 1527.6 500 1527.6 496 V491.2 L1523.2 489.6 L1527.3 479.6 C1529 468 1536 461.2 1545.5 461.2 C1556 461.2 1563.4 469 1563.4 478 C1563.4 484.5 1560.6 489 1556.2 492.6 V509.7 Z" fill="#c9e8fb" stroke="#0b3556" stroke-width="2.3" stroke-linejoin="miter"/>
<circle cx="1533.2" cy="481" r="2.1" fill="#0b3556"/>
<circle cx="1548.5" cy="476.3" r="10.4" fill="#fff"/>
<path d="M1548.5 476.3 V468 A8.3 8.3 0 0 0 1540.2 476.3 Z M1548.5 476.3 V484.6 A8.3 8.3 0 0 0 1556.8 476.3 Z" fill="#0b3556"/>
<circle cx="1548.5" cy="476.3" r="8.3" fill="none" stroke="#0b3556" stroke-width="1"/>
<path d="M1538.4 476.3 H1558.6 M1548.5 466.2 V486.4" stroke="#0b3556" stroke-width="0.9" fill="none"/>
<circle cx="572" cy="865" r="13.3" fill="#0057a8"/>
<path fill="#fff" d="M570.9 856.1 h3.3 v3.2 h-3.3z M568.4 862.5 h6.1 v8 h2.1 v3 h-8.2 v-3 h2.6 v-5 h-2.6z"/>
<path d="M666.8 864.6 V853 H649.2 V875.2 H655.4" fill="none" stroke="#0b3556" stroke-width="2"/>
<path d="M652.2 857 H664 M652.2 860.6 H664 M652.2 864.2 H664" fill="none" stroke="#0b3556" stroke-width="1.7"/>
<rect x="731.4" y="860.7" width="8.8" height="8.6" fill="#fff" stroke="#4f80b3" stroke-width="1.2"/><rect x="732.0" y="861.3000000000001" width="7.6" height="2.6" fill="#bfe3fb"/><path d="M731.8 864.2H739.8M731.8 866.7H739.8M734.5999999999999 864.1V869.1M737.1999999999999 864.1V869.1" stroke="#a9b4c2" stroke-width="0.9" fill="none"/>
<rect x="839.6" y="860.7" width="8.8" height="8.6" fill="#fff" stroke="#4f80b3" stroke-width="1.2"/><rect x="840.2" y="861.3000000000001" width="7.6" height="2.6" fill="#bfe3fb"/><path d="M840 864.2H848M840 866.7H848M842.8 864.1V869.1M845.4 864.1V869.1" stroke="#a9b4c2" stroke-width="0.9" fill="none"/>
<path d="M562.1 907.2 L567.1 902.2 L572.1 907.2 Z" fill="#6e6e6e"/></svg>
</body></html>
